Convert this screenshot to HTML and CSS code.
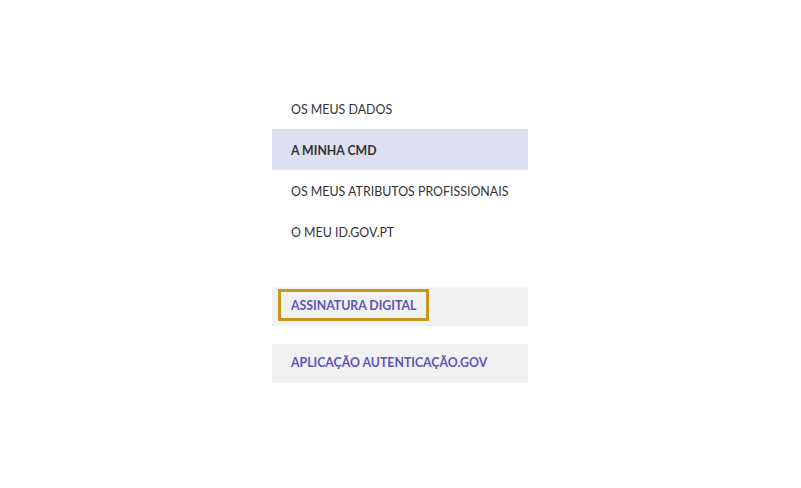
FILE: index.html
```html
<!DOCTYPE html>
<html lang="pt">
<head>
<meta charset="utf-8">
<title>Menu</title>
<link rel="stylesheet" href="styles.css">
</head>
<body>
<div class="page">
  <nav class="menu">
    <ul class="menu-list">
      <li class="menu-item"><a href="#">OS MEUS DADOS</a></li>
      <li class="menu-item active"><a href="#">A MINHA CMD</a></li>
      <li class="menu-item"><a href="#">OS MEUS ATRIBUTOS PROFISSIONAIS</a></li>
      <li class="menu-item"><a href="#">O MEU ID.GOV.PT</a></li>
    </ul>
    <div class="ext-list">
      <div class="ext-item"><a href="#" class="ext-link focused">ASSINATURA DIGITAL</a></div>
      <div class="ext-item"><a href="#" class="ext-link">APLICAÇÃO AUTENTICAÇÃO.GOV</a></div>
    </div>
  </nav>
</div>
</body>
</html>
```
FILE: styles.css
```css
html, body {
  margin: 0;
  padding: 0;
  background: #ffffff;
}
body {
  font-family: Lato, "Open Sans", sans-serif;
  font-size: 12.4px;
}
.page {
  display: flex;
  justify-content: flex-start;
  padding: 88px 0 0 272px;
}
.menu {
  width: 256px;
  display: flex;
  flex-direction: column;
}
.menu-list {
  list-style: none;
  margin: 0;
  padding: 0;
}
.menu-item {
  height: 41px;
  box-sizing: border-box;
  display: flex;
  align-items: center;
  padding: 2px 0 0 19px;
}
.menu-item a {
  color: #333333;
  text-decoration: none;
}
.menu-item.active {
  background: #dde0f1;
}
.menu-item.active a {
  font-weight: 700;
  font-size: 12.3px;
}
.ext-list {
  margin-top: 35px;
  display: flex;
  flex-direction: column;
  gap: 18px;
}
.ext-item {
  background: #f1f1f1;
  height: 39px;
  box-sizing: border-box;
  display: flex;
  align-items: flex-start;
  padding: 2px 0 0 6px;
}
.ext-link {
  color: #5c55b9;
  font-size: 12.3px;
  font-weight: 700;
  text-decoration: none;
  line-height: 25px;
  padding: 1px 10px 0 10px;
  border: 3px solid transparent;
}
.ext-link.focused {
  border-color: #c8951f;
}
```
